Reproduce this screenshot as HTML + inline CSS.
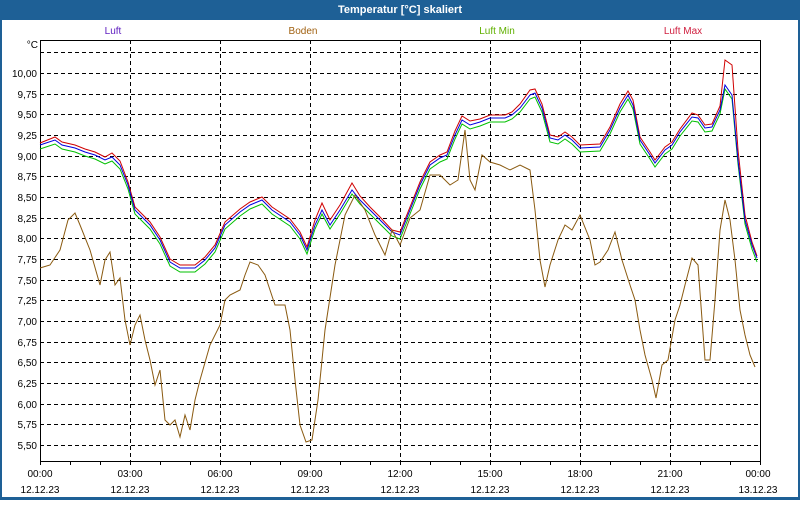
<!DOCTYPE html>
<html><head><style>
body{margin:0;width:800px;height:500px;overflow:hidden;background:#fff;font-family:"Liberation Sans",sans-serif}
</style></head><body>
<svg width="800" height="500" xmlns="http://www.w3.org/2000/svg" font-family="Liberation Sans, sans-serif" font-size="10">
<rect x="0" y="0" width="800" height="500" fill="#1e6096"/>
<rect x="2" y="20" width="796" height="477" fill="#fff"/>
<text x="400" y="13" fill="#fff" font-weight="bold" font-size="11" text-anchor="middle">Temperatur [°C] skaliert</text>
<text x="113" y="34" fill="#6020c0" text-anchor="middle">Luft</text>
<text x="303" y="34" fill="#a06010" text-anchor="middle">Boden</text>
<text x="497" y="34" fill="#60b000" text-anchor="middle">Luft Min</text>
<text x="683" y="34" fill="#d02040" text-anchor="middle">Luft Max</text>
<g stroke="#000" stroke-dasharray="4,3" stroke-width="1">
<line x1="40" y1="52.5" x2="760" y2="52.5"/><line x1="40" y1="73.5" x2="760" y2="73.5"/><line x1="40" y1="94.5" x2="760" y2="94.5"/><line x1="40" y1="114.5" x2="760" y2="114.5"/><line x1="40" y1="135.5" x2="760" y2="135.5"/><line x1="40" y1="156.5" x2="760" y2="156.5"/><line x1="40" y1="176.5" x2="760" y2="176.5"/><line x1="40" y1="197.5" x2="760" y2="197.5"/><line x1="40" y1="218.5" x2="760" y2="218.5"/><line x1="40" y1="238.5" x2="760" y2="238.5"/><line x1="40" y1="259.5" x2="760" y2="259.5"/><line x1="40" y1="280.5" x2="760" y2="280.5"/><line x1="40" y1="300.5" x2="760" y2="300.5"/><line x1="40" y1="321.5" x2="760" y2="321.5"/><line x1="40" y1="342.5" x2="760" y2="342.5"/><line x1="40" y1="362.5" x2="760" y2="362.5"/><line x1="40" y1="383.5" x2="760" y2="383.5"/><line x1="40" y1="404.5" x2="760" y2="404.5"/><line x1="40" y1="424.5" x2="760" y2="424.5"/><line x1="40" y1="445.5" x2="760" y2="445.5"/>
<line x1="130.5" y1="40" x2="130.5" y2="461"/><line x1="220.5" y1="40" x2="220.5" y2="461"/><line x1="310.5" y1="40" x2="310.5" y2="461"/><line x1="400.5" y1="40" x2="400.5" y2="461"/><line x1="490.5" y1="40" x2="490.5" y2="461"/><line x1="580.5" y1="40" x2="580.5" y2="461"/><line x1="670.5" y1="40" x2="670.5" y2="461"/>
</g>
<rect x="40.5" y="40.5" width="720" height="421" fill="none" stroke="#000"/>
<g stroke="#000"><line x1="40.5" y1="461" x2="40.5" y2="465"/><line x1="70.5" y1="461" x2="70.5" y2="465"/><line x1="100.5" y1="461" x2="100.5" y2="465"/><line x1="130.5" y1="461" x2="130.5" y2="465"/><line x1="160.5" y1="461" x2="160.5" y2="465"/><line x1="190.5" y1="461" x2="190.5" y2="465"/><line x1="220.5" y1="461" x2="220.5" y2="465"/><line x1="250.5" y1="461" x2="250.5" y2="465"/><line x1="280.5" y1="461" x2="280.5" y2="465"/><line x1="310.5" y1="461" x2="310.5" y2="465"/><line x1="340.5" y1="461" x2="340.5" y2="465"/><line x1="370.5" y1="461" x2="370.5" y2="465"/><line x1="400.5" y1="461" x2="400.5" y2="465"/><line x1="430.5" y1="461" x2="430.5" y2="465"/><line x1="460.5" y1="461" x2="460.5" y2="465"/><line x1="490.5" y1="461" x2="490.5" y2="465"/><line x1="520.5" y1="461" x2="520.5" y2="465"/><line x1="550.5" y1="461" x2="550.5" y2="465"/><line x1="580.5" y1="461" x2="580.5" y2="465"/><line x1="610.5" y1="461" x2="610.5" y2="465"/><line x1="640.5" y1="461" x2="640.5" y2="465"/><line x1="670.5" y1="461" x2="670.5" y2="465"/><line x1="700.5" y1="461" x2="700.5" y2="465"/><line x1="730.5" y1="461" x2="730.5" y2="465"/><line x1="760.5" y1="461" x2="760.5" y2="465"/></g>
<g text-anchor="end" fill="#000">
<text x="38" y="48">°C</text>
<text x="37" y="77">10,00</text><text x="37" y="98">9,75</text><text x="37" y="118">9,50</text><text x="37" y="139">9,25</text><text x="37" y="160">9,00</text><text x="37" y="180">8,75</text><text x="37" y="201">8,50</text><text x="37" y="222">8,25</text><text x="37" y="242">8,00</text><text x="37" y="263">7,75</text><text x="37" y="284">7,50</text><text x="37" y="304">7,25</text><text x="37" y="325">7,00</text><text x="37" y="346">6,75</text><text x="37" y="366">6,50</text><text x="37" y="387">6,25</text><text x="37" y="408">6,00</text><text x="37" y="428">5,75</text><text x="37" y="449">5,50</text>
</g>
<g text-anchor="middle" fill="#000">
<text x="40" y="477">00:00</text><text x="130" y="477">03:00</text><text x="220" y="477">06:00</text><text x="310" y="477">09:00</text><text x="400" y="477">12:00</text><text x="490" y="477">15:00</text><text x="580" y="477">18:00</text><text x="670" y="477">21:00</text><text x="758" y="477">00:00</text>
<text x="40" y="493">12.12.23</text><text x="130" y="493">12.12.23</text><text x="220" y="493">12.12.23</text><text x="310" y="493">12.12.23</text><text x="400" y="493">12.12.23</text><text x="490" y="493">12.12.23</text><text x="580" y="493">12.12.23</text><text x="670" y="493">12.12.23</text><text x="758" y="493">13.12.23</text>
</g>
<defs><polyline id="L" points="40,145 55,140 62,145 75,148 85,152 95,155 105,160 112,157 120,165 128,185 135,210 150,225 160,240 170,262 180,268 195,268 205,260 215,248 225,225 240,212 250,205 262,200 272,210 290,222 300,235 307,250 315,225 322,210 330,225 340,210 352,190 360,200 370,210 380,220 392,232 400,235 410,210 420,185 430,165 440,158 447,155 455,135 462,120 470,125 480,122 490,118 505,118 512,115 520,108 530,95 535,93 542,108 550,138 558,140 565,135 572,140 580,148 600,147 610,130 620,108 628,95 633,105 640,140 650,155 655,163 665,150 672,145 680,132 692,117 698,118 705,128 712,127 720,110 725,85 732,95 738,160 745,220 752,245 757,258" fill="none"/></defs>
<use href="#L" stroke="#00c000" transform="translate(0,4)"/>
<polyline points="40,143 55,137 62,142 75,145 85,149 95,152 105,157 112,153 120,161 128,182 135,207 150,222 160,237 170,259 180,265 195,265 205,257 215,245 225,222 240,209 250,202 262,197 272,207 290,219 300,232 307,247 315,220 322,203 330,220 340,205 352,183 360,196 370,207 380,217 392,230 400,232 410,207 420,182 430,162 440,155 447,152 455,131 462,116 470,121 480,119 490,115 505,115 512,112 520,104 530,90 535,89 542,104 550,135 558,137 565,132 572,137 580,145 600,144 610,127 620,104 628,91 633,100 640,137 650,152 655,160 665,147 672,142 680,129 692,113 698,115 705,125 712,124 720,106 725,60 732,65 738,150 745,215 752,242 757,256" fill="none" stroke="#d00000"/>
<use href="#L" stroke="#0000e0"/>
<polyline points="40,268 50,265 60,250 68,220 75,213 80,225 90,250 100,285 105,260 110,252 115,285 120,278 125,320 130,345 135,325 140,315 145,340 150,360 155,385 160,370 165,420 170,425 175,420 180,437 185,415 190,430 195,400 200,380 210,345 220,325 225,300 230,295 240,290 245,275 250,262 258,265 265,275 275,305 285,305 290,330 295,380 300,425 306,442 312,440 318,400 325,330 335,265 345,215 355,195 365,210 375,235 385,255 392,230 400,245 410,218 420,210 430,175 440,175 450,185 458,180 465,130 470,180 475,190 482,155 490,162 500,165 510,170 520,165 530,170 535,210 540,260 545,287 550,265 558,240 565,225 572,230 580,215 590,240 595,265 600,262 608,250 615,232 622,260 630,285 635,300 640,330 645,355 652,380 656,398 662,365 668,360 675,320 680,305 685,285 692,258 698,265 705,360 710,360 715,300 720,230 725,200 730,220 735,260 740,310 745,335 750,355 755,367" fill="none" stroke="#8a5a10"/>
</svg>
</body></html>
